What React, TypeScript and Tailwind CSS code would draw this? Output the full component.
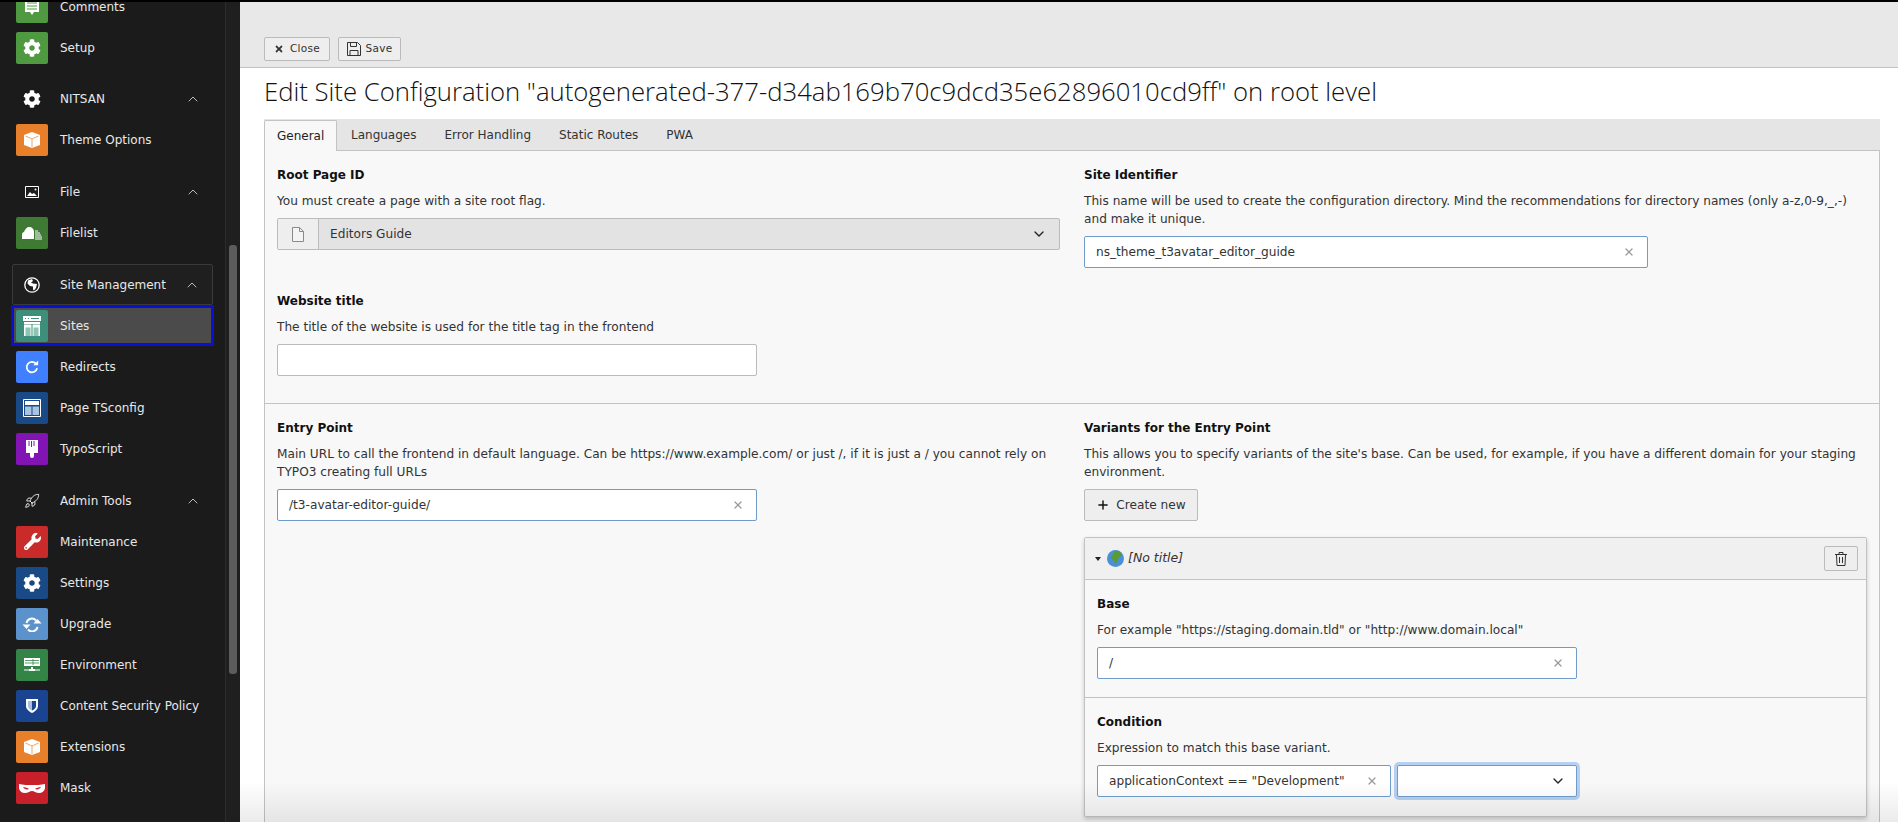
import type { ReactNode } from "react";
import { ChevronDown, ChevronUp, Plus, Rocket, X } from "lucide-react";
import { FaCog, FaTimes, FaWrench } from "react-icons/fa";

const ui = "font-['DejaVu_Sans',sans-serif]";

function Cube() {
  return (
    <svg viewBox="0 0 18 18" className="h-[18px] w-[18px]">
      <path d="M9 1l8 3v10l-8 3-8-3V4z" fill="#fff" />
      <path d="M2.500 5l6.500 3 6.500-3M9 8v8" fill="none" stroke="#eda566" strokeWidth="1" />
    </svg>
  );
}

function CommentGlyph() {
  return (
    <svg viewBox="0 0 18 18" className="h-[18px] w-[18px]">
      <path d="M2 1h14v13h-5l-2 3-2-3H2z" fill="#fff" />
      <path d="M4 5h10M4 8h10M4 11h10" stroke="#4f9a41" strokeWidth="1" />
    </svg>
  );
}

function FilelistGlyph() {
  return (
    <svg viewBox="0 0 20 14" className="h-[14px] w-[20px]">
      <path d="M0 13V9c0-2 1-3 2-3 1-3 3-5 5-5 3 0 5 2 5 5v7z" fill="#fff" />
      <path d="M13 5h3M13 7h5M13 9h6M13 11h7M13 13h7" stroke="#fff" strokeWidth="1" />
    </svg>
  );
}

function SitesGlyph() {
  return (
    <svg viewBox="0 0 18 20" className="h-[20px] w-[18px]">
      <path d="M0 0h18v5H0z" fill="#fff" />
      <path d="M2 2.500h1M5 2.500h1M8 2.500h8" stroke="#3d8f7c" strokeWidth="1" />
      <path d="M1 6h16v2H1z" fill="#fff" />
      <path d="M1 8.500h7.500V20H1zM9.500 8.500H17V20H9.500z" fill="#fff" />
      <path d="M2.500 11.500h5V20h-5zM10.500 11.500h5V20h-5z" fill="#8cc4b6" />
    </svg>
  );
}

function RedirectGlyph() {
  return (
    <svg viewBox="0 0 16 16" className="h-[14px] w-[14px]" fill="none">
      <path d="M12.500 4.200A6 6 0 1 0 13.800 9.500" stroke="#fff" strokeWidth="2" />
      <path d="M9.500 6H15V.6z" fill="#fff" />
    </svg>
  );
}

function TsconfigGlyph() {
  return (
    <svg viewBox="0 0 18 18" className="h-[18px] w-[18px]">
      <path d="M.5.500h17v17H.5z" fill="none" stroke="#fff" />
      <path d="M2 2h14v4H2z" fill="#fff" />
      <path d="M2 7.500h6.500V16H2zM9.500 7.500H16V16H9.500z" fill="#a9c4e0" />
    </svg>
  );
}

function BrushGlyph() {
  return (
    <svg viewBox="0 0 12 18" className="h-[18px] w-[12px]">
      <path d="M0 0h12v11H0z" fill="#fff" />
      <path d="M3 1v5M5.500 1v6M8 1v5" stroke="#8214b4" strokeWidth="1" />
      <path d="M0 11h12v2H8v3a2 2 0 0 1-4 0v-3H0z" fill="#fff" />
    </svg>
  );
}

function EnvGlyph() {
  return (
    <svg viewBox="0 0 16 14" className="h-[14px] w-[16px]">
      <path d="M0 0h16v8H0z" fill="#fff" />
      <path d="M1 2.500h14M1 5h14M9 1v6" stroke="#358447" strokeWidth=".8" />
      <path d="M7 9h2v2h2v2H5v-2h2zM0 11.500h5v1H0zM11 11.500h5v1h-5z" fill="#fff" />
    </svg>
  );
}

function ShieldGlyph() {
  return (
    <svg viewBox="0 0 12 14" className="h-[14px] w-[12px]">
      <path d="M0 0h12v7c0 3-3 5.500-6 7-3-1.500-6-4-6-7z" fill="#fff" />
      <path d="M2 2h4v9.500C4 10.500 2 9 2 7z" fill="#a8bfe0" />
      <path d="M6 2h4v5c0 2-2 3.500-4 4.500z" fill="#1a4490" />
    </svg>
  );
}

function MaskGlyph() {
  return (
    <svg viewBox="0 0 26 10" className="h-[10px] w-[26px]">
      <path
        fillRule="evenodd"
        d="M0 1c4 1 9 1 13 1s9 0 13-1c1 5-1 9-6 9-3 0-5-2-7-2s-4 2-7 2C1 10-1 6 0 1zm4 3c1 2 4 3 6 2-1-1-4-2-6-2zm18 0c-2 0-5 1-6 2 2 1 5 0 6-2z"
        fill="#fff"
      />
    </svg>
  );
}

function SyncGlyph() {
  return (
    <svg viewBox="0 0 20 16" className="h-[16px] w-[20px]" fill="none">
      <path d="M4.500 7A5.500 5.500 0 0 1 14 4.500" stroke="#fff" strokeWidth="2" />
      <path d="M15.500 11A5.500 5.500 0 0 1 6 13.500" stroke="#fff" strokeWidth="2" />
      <path d="M11.500 7.500h8l-4-4.500zM.5 8.500h8l-4 4.500z" fill="#fff" />
    </svg>
  );
}

function EarthGlyph() {
  return (
    <svg viewBox="0 0 16 16" className="h-[16px] w-[16px]" fill="none">
      <circle cx="8" cy="8" r="7.200" stroke="#fff" strokeWidth="1.300" />
      <path d="M4 3.500l4-1.500 1 2-2 1.500 2 1 4 .5-1 4-2 2.500-1-1V9.500L6 9 3.500 6.500z" fill="#fff" />
    </svg>
  );
}

function ImageGlyph() {
  return (
    <svg viewBox="0 0 14 12" className="h-[12px] w-[14px]">
      <path d="M.5.500h13v11H.5z" fill="none" stroke="#fff" />
      <path d="M2 10l3-4 2 2 2-1 3 3z" fill="#fff" />
      <circle cx="10.500" cy="3.500" r="1" fill="#fff" />
    </svg>
  );
}

function DiskIcon() {
  return (
    <svg viewBox="0 0 14 14" className="h-[14px] w-[14px]" fill="none" stroke="#333">
      <path d="M.5.500h10l3 3v10H.5z" />
      <path d="M3.500.500v4h6v-4M3 13.500v-5h8v5" />
    </svg>
  );
}

function PageIcon() {
  return (
    <svg viewBox="0 0 12 15" className="h-[15px] w-[12px]" fill="none" stroke="#8a8a8a">
      <path d="M.5.500h7l4 4v10H.5z" fill="#f4f4f4" />
      <path d="M7.500.500v4h4" />
    </svg>
  );
}

function TrashIcon() {
  return (
    <svg viewBox="0 0 12 14" className="h-[14px] w-[12px]" fill="none" stroke="#333">
      <path d="M0 2.500h12M4 2.500V.500h4v2M1.500 2.500l.5 11h8l.5-11M4.500 5v6M7.500 5v6" />
    </svg>
  );
}

function GlobeIcon() {
  return (
    <svg viewBox="0 0 16 16" className="h-[17px] w-[17px]">
      <circle cx="8" cy="8" r="8" fill="#4a8fd8" />
      <path d="M7 1c3-1 6 1 7 3 0 2-2 2-3 3l-1 3-2 4c-1-2-1-4-2-5-2 0-3-2-2-3 1-2 3-3 3-5z" fill="#5c9a35" />
    </svg>
  );
}

const tile = "flex h-8 w-8 shrink-0 items-center justify-center rounded-[2px]";

function Item({ bg, glyph, label, active }: { bg: string; glyph: ReactNode; label: string; active?: boolean }) {
  return (
    <div className="flex h-[41px] items-center">
      <div
        className={
          active
            ? "-mx-[1px] flex h-[41px] w-[203px] items-center gap-3 border-[3px] border-[#0a0fd2] bg-[#4b4b4b] pl-[2px]"
            : "flex w-[200px] items-center gap-3 pl-1"
        }
      >
        <div className={`${tile} ${bg}`}>{glyph}</div>
        <span>{label}</span>
      </div>
    </div>
  );
}

function Group({ icon, label, className }: { icon: ReactNode; label: string; className: string }) {
  return (
    <div className={`flex h-[41px] w-[201px] items-center gap-3 pr-[12px] ${className}`}>
      <div className="flex w-8 justify-center text-white">{icon}</div>
      <span>{label}</span>
      <ChevronUp className="ml-auto h-[16px] w-[16px] text-[#bdbdbd]" strokeWidth={1.5} />
    </div>
  );
}

function Sidebar() {
  return (
    <aside className="flex h-full w-[240px] shrink-0 overflow-hidden bg-[#1b1b1b] text-[12px] text-[#e8e8e8]">
      <nav className="-mt-[16px] w-[225px] shrink-0 pl-3">
        <Item bg="bg-[#4f9a41]" glyph={<CommentGlyph />} label="Comments" />
        <Item bg="bg-[#4f9a41]" glyph={<FaCog className="h-[18px] w-[18px] text-white" />} label="Setup" />
        <Group className="mt-[10px] pl-1" icon={<FaCog className="h-[18px] w-[18px]" />} label="NITSAN" />
        <Item bg="bg-[#e8802b]" glyph={<Cube />} label="Theme Options" />
        <Group className="mt-[11px] pl-1" icon={<ImageGlyph />} label="File" />
        <Item bg="bg-[#3f7a34]" glyph={<FilelistGlyph />} label="Filelist" />
        <Group
          className="mt-[11px] rounded-[2px] border border-[#3a3a3a] bg-[#1f1f1f] pl-[3px]"
          icon={<EarthGlyph />}
          label="Site Management"
        />
        <Item bg="bg-[#3d8f7c]" glyph={<SitesGlyph />} label="Sites" active />
        <Item bg="bg-[#4080ff]" glyph={<RedirectGlyph />} label="Redirects" />
        <Item bg="bg-[#194a85]" glyph={<TsconfigGlyph />} label="Page TSconfig" />
        <Item bg="bg-[#8214b4]" glyph={<BrushGlyph />} label="TypoScript" />
        <Group className="mt-[11px] pl-1" icon={<Rocket className="h-[16px] w-[16px]" strokeWidth={1.25} />} label="Admin Tools" />
        <Item bg="bg-[#c92a2a]" glyph={<FaWrench className="h-[17px] w-[17px] text-white" />} label="Maintenance" />
        <Item bg="bg-[#194a85]" glyph={<FaCog className="h-[18px] w-[18px] text-white" />} label="Settings" />
        <Item bg="bg-[#5c92cc]" glyph={<SyncGlyph />} label="Upgrade" />
        <Item bg="bg-[#358447]" glyph={<EnvGlyph />} label="Environment" />
        <Item bg="bg-[#1a4490]" glyph={<ShieldGlyph />} label="Content Security Policy" />
        <Item bg="bg-[#e8802b]" glyph={<Cube />} label="Extensions" />
        <Item bg="bg-[#c8202a]" glyph={<MaskGlyph />} label="Mask" />
      </nav>
      <div className="flex-1 border-l border-[#2c2c2c] bg-[#1f1f1f] pl-[3px] pr-[2px] pt-[243px]">
        <div className="h-[429px] w-[8px] rounded-[3px] bg-[#5c5c5c]" />
      </div>
    </aside>
  );
}

function TextInput({ value, className }: { value: string; className: string }) {
  return (
    <div className={`flex h-8 items-center justify-between rounded-[2px] border border-[#6f9ccb] bg-white pl-[11px] pr-[12px] ${className}`}>
      <span>{value}</span>
      <X className="h-[12px] w-[12px] text-[#9a9a9a]" strokeWidth={2.5} />
    </div>
  );
}

function Label({ children }: { children: ReactNode }) {
  return <div className="mb-2 text-[12px] leading-[18px] font-bold text-[#111]">{children}</div>;
}

function Desc({ children }: { children: ReactNode }) {
  return <p className="mb-2 leading-[18px]">{children}</p>;
}

function VariantCard() {
  return (
    <div className="mt-4 h-[280px] w-full rounded-[2px] border border-[#c3c3c3] bg-[#f8f8f8] shadow-[0_2px_4px_rgba(0,0,0,0.2)]">
      <div className="flex h-[42px] items-center border-b border-[#c3c3c3] bg-[#f0f0f0] pl-[10px] pr-[8px]">
        <div className="mr-[6px] h-0 w-0 border-x-[3.5px] border-t-[4px] border-x-transparent border-t-[#222]" />
        <GlobeIcon />
        <span className="ml-[4px] text-[12.5px] italic">[No title]</span>
        <div className="ml-auto flex h-[25px] w-[34px] items-center justify-center rounded-[2px] border border-[#bbb] bg-[#eee]">
          <TrashIcon />
        </div>
      </div>
      <div className="h-[118px] border-b border-[#c3c3c3] px-3 pt-[15px]">
        <Label>Base</Label>
        <Desc>For example "https://staging.domain.tld" or "http://www.domain.local"</Desc>
        <TextInput value="/" className="w-[480px]" />
      </div>
      <div className="px-3 pt-[15px]">
        <Label>Condition</Label>
        <Desc>Expression to match this base variant.</Desc>
        <div className="flex w-[480px] gap-[6px]">
          <TextInput value={'applicationContext == "Development"'} className="w-[294px]" />
          <div className="flex h-8 w-[180px] items-center justify-end rounded-[2px] border border-[#6f9ccb] bg-white pr-[10px] shadow-[0_0_0_3px_#b5d0f2]">
            <ChevronDown className="h-[16px] w-[16px] text-[#222]" strokeWidth={2} />
          </div>
        </div>
      </div>
    </div>
  );
}

export default function App() {
  const tabs = ["Languages", "Error Handling", "Static Routes", "PWA"];

  return (
    <div className={`flex h-screen flex-col overflow-hidden bg-white ${ui}`}>
      <div className="h-[2px] shrink-0 bg-black" />
      <div className="flex min-h-0 flex-1">
        <Sidebar />
        <main className="relative min-w-0 flex-1 text-[12.15px] text-[#333]">
          <div className="flex h-[66px] items-end gap-2 border-b border-[#c3c3c3] bg-[#e8e8e8] pb-[6px] pl-6">
            <button className="flex h-[24px] w-[66px] items-center justify-center gap-[6px] rounded-[2px] border border-[#bbb] bg-[#eee] text-[10.5px] tracking-[0.3px]">
              <FaTimes className="h-[10px] w-[10px]" />
              Close
            </button>
            <button className="flex h-[24px] w-[63px] items-center justify-center gap-[5px] rounded-[2px] border border-[#bbb] bg-[#eee] text-[10.5px] tracking-[0.3px]">
              <DiskIcon />
              Save
            </button>
          </div>
          <div className="pl-6 pr-[18px]">
            <h1 className="flex h-[51px] items-center pb-[2px] font-['Open_Sans',sans-serif] text-[25.7px] font-light text-[#111]">
              Edit Site Configuration "autogenerated-377-d34ab169b70c9dcd35e62896010cd9ff" on root level
            </h1>
            <div className="flex h-[31px] border border-b-0 border-[#e5e5e5] bg-[#e5e5e5] text-[12px]">
              <div className="z-10 -ml-[1px] h-[31px] w-[73px] rounded-t-[2px] border border-b-0 border-[#c3c3c3] bg-[#f8f8f8] pl-[12px] leading-[31px] text-[#222]">
                General
              </div>
              {tabs.map((t) => (
                <div key={t} className="px-[14px] leading-[31px]">
                  {t}
                </div>
              ))}
            </div>
            <div className="border border-[#c3c3c3] bg-[#f8f8f8]">
              <div className="grid h-[253px] grid-cols-2 border-b border-[#c3c3c3] pt-[15px]">
                <div className="px-3">
                  <Label>Root Page ID</Label>
                  <Desc>You must create a page with a site root flag.</Desc>
                  <div className="flex h-8 rounded-[2px] border border-[#bbb] bg-[#e3e3e3]">
                    <div className="flex w-[41px] items-center justify-center border-r border-[#bbb] bg-[#eee]">
                      <PageIcon />
                    </div>
                    <span className="ml-[11px] leading-[30px]">Editors Guide</span>
                    <ChevronDown className="my-auto ml-auto mr-[12px] h-[16px] w-[16px] text-[#222]" strokeWidth={2} />
                  </div>
                  <div className="mt-[42px]">
                    <Label>Website title</Label>
                    <Desc>The title of the website is used for the title tag in the frontend</Desc>
                    <div className="h-8 w-[480px] rounded-[2px] border border-[#bbb] bg-white" />
                  </div>
                </div>
                <div className="px-3">
                  <Label>Site Identifier</Label>
                  <Desc>
                    This name will be used to create the configuration directory. Mind the recommendations for directory names (only a-z,0-9,_,-) and make it unique.
                  </Desc>
                  <TextInput value="ns_theme_t3avatar_editor_guide" className="w-[564px]" />
                </div>
              </div>
              <div className="grid h-[450px] grid-cols-2 pt-[15px]">
                <div className="px-3">
                  <Label>Entry Point</Label>
                  <Desc>
                    Main URL to call the frontend in default language. Can be https://www.example.com/ or just /, if it is just a / you cannot rely on TYPO3 creating full URLs
                  </Desc>
                  <TextInput value="/t3-avatar-editor-guide/" className="w-[480px]" />
                </div>
                <div className="px-3">
                  <Label>Variants for the Entry Point</Label>
                  <Desc>
                    This allows you to specify variants of the site's base. Can be used, for example, if you have a different domain for your staging environment.
                  </Desc>
                  <button className="flex h-8 w-[114px] items-center justify-center gap-[6px] rounded-[2px] border border-[#bbb] bg-[#eee]">
                    <Plus className="h-[14px] w-[14px] text-[#111]" strokeWidth={2.5} />
                    Create new
                  </button>
                  <VariantCard />
                </div>
              </div>
            </div>
          </div>
          <div className="pointer-events-none absolute inset-x-0 bottom-0 h-[40px] bg-gradient-to-t from-[#00000014] to-transparent" />
        </main>
      </div>
    </div>
  );
}
